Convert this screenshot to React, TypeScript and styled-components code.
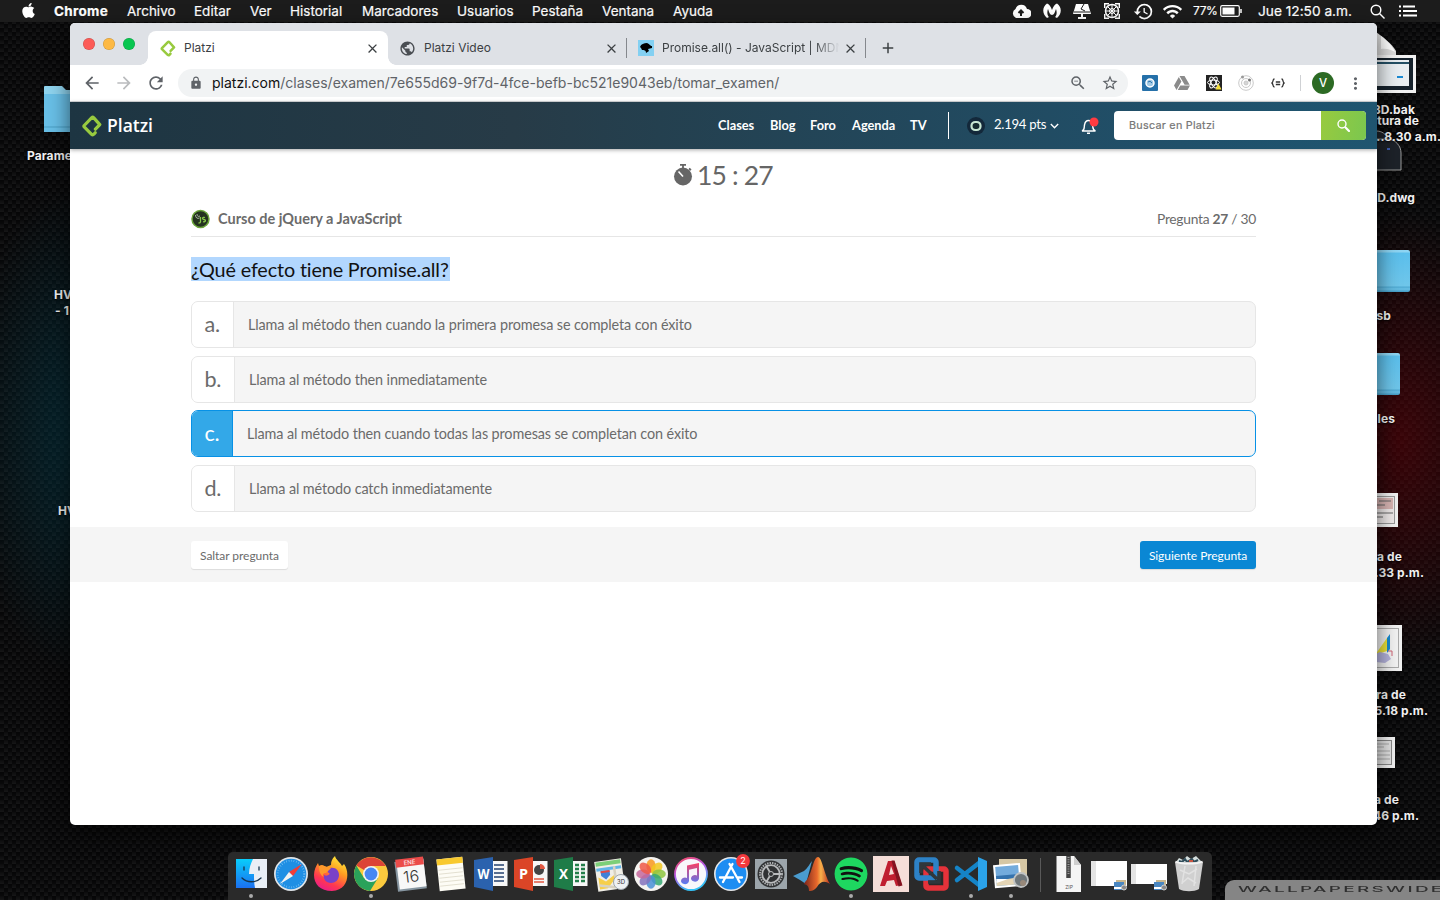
import React from "react";
import styled, { createGlobalStyle, css } from "styled-components";
import { FaApple, FaSpotify, FaGoogleDrive } from "react-icons/fa";
import {
  MdArrowBack, MdArrowForward, MdRefresh, MdLock, MdZoomOut, MdStarBorder,
  MdMoreVert, MdPublic, MdClose, MdAdd, MdHistory, MdWifi,
} from "react-icons/md";

const sans = `Inter, "Liberation Sans", sans-serif`;
const lato = `Lato, "Liberation Sans", sans-serif`;

const GlobalStyle = createGlobalStyle`
  * { box-sizing: border-box; }
  html, body { margin: 0; padding: 0; overflow: hidden; background: #0a0a0a; }
  body { font-variant-ligatures: none; }
  svg { display: block; flex: none; }
  button { border: 0; padding: 0; font: inherit; letter-spacing: inherit; }
`;

const Desktop = styled.div`
  position: relative;
  width: 1440px;
  height: 900px;
  overflow: hidden;
  font-family: ${sans};
  background:
    radial-gradient(ellipse 130px 230px at 1400px 440px, rgba(110, 0, 8, 0.48), transparent),
    radial-gradient(ellipse 130px 250px at 90px 430px, rgba(0, 75, 95, 0.45), transparent),
    linear-gradient(180deg, rgba(0, 0, 0, 0.45), transparent) 0 0 / 8px 4px,
    repeating-conic-gradient(#0a0a0b 0 25%, #161617 0 50%) 0 0 / 8px 8px;
`;

/* ---------- Menu bar ---------- */

const MenuBar = styled.header`
  display: flex;
  justify-content: space-between;
  height: 22px;
  padding: 0 22px 0 20px;
  background: #1c1c1c;
  color: #fff;
  font-size: 13.5px;
  line-height: 22px;
  white-space: nowrap;
  -webkit-text-stroke: 0.2px #fff;
`;
const MenuList = styled.nav`
  display: flex;
  align-items: center;
`;
const MenuItem = styled.span<{ $w: number; $bold?: boolean }>`
  flex: 0 0 ${(p) => p.$w}px;
  font-weight: ${(p) => (p.$bold ? 700 : 400)};
  letter-spacing: ${(p) => (p.$bold ? "0.3px" : "0")};
`;
const StatusList = styled.div`
  display: flex;
  align-items: center;
`;
const StatusItem = styled.span<{ $w: number }>`
  display: flex;
  align-items: center;
  flex: 0 0 ${(p) => p.$w}px;
`;
const Battery = styled.span`
  font-size: 12px;
  letter-spacing: -0.4px;
  width: 27px;
`;
const Clock = styled.span`
  font-size: 13.7px;
`;

/* ---------- Desktop items ---------- */

const Spot = styled.div<{ $x?: number; $r?: number; $y: number }>`
  position: absolute;
  top: ${(p) => p.$y}px;
  ${(p) => (p.$x !== undefined ? css`left: ${p.$x}px;` : css`right: ${1440 - (p.$r ?? 0)}px;`)}
`;
const Label = styled(Spot)`
  color: #f1f1f1;
  font-size: 12px;
  font-weight: 650;
  line-height: 16px;
  letter-spacing: 0.1px;
  white-space: nowrap;
  text-shadow: 0 1px 2px #000;
`;
const Folder = styled(Spot)`
  width: 60px;
  height: 42px;
  border-radius: 2px;
  background: linear-gradient(180deg, #8ed5f3 0 2px, #5bbfec 3px, #6fc6ea 36px, #4ea9d2 37px, #69c0e6 39px, #429bc4);
`;
const Thumb = styled(Spot)<{ $h: number }>`
  width: 60px;
  height: ${(p) => p.$h}px;
  padding: 3px;
  background: #f2f2f2;
  display: flex;
  justify-content: flex-end;
`;
const Watermark = styled.div`
  position: absolute;
  left: 1225px;
  top: 880px;
  width: 215px;
  height: 20px;
  padding-left: 13px;
  overflow: hidden;
  border-radius: 9px 0 0 0;
  background: #858585;
  color: #303030;
`;
const WatermarkText = styled.span`
  display: block;
  font-size: 8px;
  font-weight: 500;
  line-height: 19px;
  letter-spacing: 1px;
  transform: scaleX(2.36);
  transform-origin: left;
  white-space: nowrap;
`;

/* ---------- Browser ---------- */

const Window = styled.main`
  position: absolute;
  left: 70px;
  top: 23px;
  width: 1307px;
  height: 802px;
  display: flex;
  flex-direction: column;
  overflow: hidden;
  border-radius: 5px;
  background: #fff;
  box-shadow: 0 8px 22px rgba(0, 0, 0, 0.6);
`;
const TabStrip = styled.div`
  display: flex;
  height: 42px;
  padding: 8px 0 0 13px;
  background: #dee1e6;
  color: #3c4043;
`;
const Lights = styled.div`
  display: flex;
  gap: 8px;
  width: 65px;
  padding-top: 7px;
`;
const Light = styled.i<{ $c: string }>`
  width: 12px;
  height: 12px;
  border-radius: 50%;
  background: ${(p) => p.$c};
  box-shadow: inset 0 0 0 0.5px rgba(0, 0, 0, 0.2);
`;
const Tab = styled.div<{ $w: number; $active?: boolean; $rule?: boolean; $pad?: number }>`
  position: relative;
  display: flex;
  align-items: center;
  width: ${(p) => p.$w}px;
  height: 34px;
  padding: 0 8px 0 ${(p) => p.$pad ?? 12}px;
  border-radius: 8px 8px 0 0;
  background: ${(p) => (p.$active ? "#fff" : "transparent")};
  ${(p) => p.$active && css`
    &::before, &::after {
      content: "";
      position: absolute;
      bottom: 0;
      width: 8px;
      height: 8px;
    }
    &::before { left: -8px; background: radial-gradient(circle at 0 0, transparent 7.5px, #fff 8px); }
    &::after { right: -8px; background: radial-gradient(circle at 100% 0, transparent 7.5px, #fff 8px); }
  `}
  ${(p) => p.$rule && css`
    &::after {
      content: "";
      position: absolute;
      right: 0;
      top: 7px;
      width: 1px;
      height: 20px;
      background: #85888d;
    }
  `}
`;
const TabTitle = styled.span<{ $fade?: boolean }>`
  flex: 1;
  margin-left: 8px;
  overflow: hidden;
  white-space: nowrap;
  font-size: 12px;
  line-height: 20px;
  ${(p) => p.$fade && css`mask-image: linear-gradient(90deg, #000 84%, transparent 98%);`}
`;
const NewTab = styled.div`
  display: flex;
  align-items: center;
  height: 34px;
  padding-left: 13px;
  stroke-width: 0.8px;
`;
const Toolbar = styled.div`
  display: flex;
  align-items: center;
  height: 37px;
  padding: 0 12px 1px;
  color: #5f6368;
`;
const ToolIcon = styled.span<{ $w: number }>`
  display: flex;
  flex: 0 0 ${(p) => p.$w}px;
`;
const Omnibox = styled.div`
  display: flex;
  align-items: center;
  width: 950px;
  height: 28px;
  padding: 0 9px 0 11px;
  border-radius: 14px;
  background: #f1f3f4;
`;
const Url = styled.span`
  flex: 1;
  margin-left: 9px;
  font-size: 14.02px;
  line-height: 20px;
  white-space: nowrap;
  color: #5f6368;
  b { font-weight: 400; color: #111; }
`;
const Extensions = styled.div`
  display: flex;
  align-items: center;
  margin-left: 14px;
`;
const Rule = styled.i`
  width: 1px;
  height: 16px;
  margin: 0 11px 0 14px;
  background: #cfd1d4;
`;
const Profile = styled.span`
  width: 22px;
  height: 22px;
  margin-right: 12px;
  border-radius: 50%;
  background: #2c6a24;
  color: #fff;
  font-size: 11.5px;
  font-weight: 500;
  line-height: 22px;
  text-align: center;
`;

/* ---------- Platzi page ---------- */

const SiteHeader = styled.div`
  position: relative;
  display: flex;
  align-items: center;
  height: 47px;
  flex: none;
  padding: 0 11px 0 12px;
  background: linear-gradient(90deg, #1d3542, #273b47 34%, #24404f 45%, #20506a 85%, #1f5570);
  box-shadow: 0 1px 4px rgba(0, 0, 0, 0.35);
  color: #fff;
  font-family: ${lato};
`;
const HeaderEdge = styled.i`
  height: 1px;
  flex: none;
  background: #d8dadd;
  margin-top: -1px;
`;
const Brand = styled.span`
  width: 611px;
  margin-left: 5px;
  font-family: "Open Sans", ${lato};
  font-size: 17.5px;
  font-weight: 600;
  line-height: 24px;
  padding-bottom: 1px;
`;
const NavLink = styled.span<{ $w: number }>`
  flex: 0 0 ${(p) => p.$w}px;
  font-size: 12.8px;
  font-weight: 700;
  line-height: 20px;
  padding-bottom: 1px;
`;
const NavRule = styled.i`
  width: 1px;
  height: 27px;
  background: #fff;
`;
const Points = styled.span`
  width: 56px;
  margin-left: 9px;
  font-size: 13.2px;
  letter-spacing: -0.3px;
  line-height: 20px;
  padding-bottom: 4px;
  white-space: nowrap;
`;
const Search = styled.div`
  display: flex;
  width: 252px;
  height: 29px;
  margin-left: auto;
  overflow: hidden;
  border-radius: 4px;
  background: #fff;
`;
const SearchField = styled.span`
  flex: 1;
  padding-left: 15px;
  color: #757575;
  font-family: ${sans};
  font-size: 10.8px;
  letter-spacing: 0.25px;
  line-height: 29px;
  -webkit-text-stroke: 0.2px #757575;
`;
const SearchButton = styled.button`
  display: flex;
  align-items: center;
  justify-content: center;
  width: 45px;
  background: linear-gradient(100deg, #98ca3f, #7bc74f);
`;

const Exam = styled.section`
  width: 1065px;
  margin-left: 121px;
  color: #6b6b6b;
  font-family: ${lato};
`;
const Timer = styled.div`
  display: flex;
  align-items: center;
  height: 52px;
  padding-left: 482px;
  font-size: 26.5px;
  letter-spacing: -0.85px;
  line-height: 54px;
  color: #666;
  gap: 4px;
`;
const CourseRow = styled.div`
  display: flex;
  align-items: center;
  height: 36px;
  border-bottom: 1px solid #e6e6e6;
`;
const CourseName = styled.b`
  flex: 1;
  margin-left: 8px;
  font-size: 14.5px;
`;
const Progress = styled.span`
  font-size: 13.8px;
  letter-spacing: -0.27px;
`;
const Question = styled.h1`
  width: 259px;
  height: 24px;
  margin: 20px 0;
  background: #b2d7fe;
  color: #111;
  font-size: 19.8px;
  letter-spacing: -0.14px;
  font-weight: 400;
  line-height: 25px;
  white-space: nowrap;
`;
const Options = styled.div`
  display: flex;
  flex-direction: column;
  gap: 7.4px;
`;
const Option = styled.div<{ $selected?: boolean }>`
  display: flex;
  height: 47.2px;
  overflow: hidden;
  border: 1px solid ${(p) => (p.$selected ? "#0791e6" : "#e6e6e6")};
  border-radius: 7px;
  background: #f5f5f5;
`;
const Letter = styled.span<{ $selected?: boolean; $w: number }>`
  width: ${(p) => p.$w}px;
  padding-left: 12.5px;
  border-right: 1px solid ${(p) => (p.$selected ? "#0791e6" : "#e6e6e6")};
  background: ${(p) => (p.$selected ? "#33a8e8" : "#fff")};
  color: ${(p) => (p.$selected ? "#fff" : "#6b6b6b")};
  font-size: 21.6px;
  letter-spacing: -0.3px;
  line-height: 44px;
`;
const Answer = styled.span`
  padding-left: 14px;
  font-size: 14.4px;
  letter-spacing: -0.11px;
  line-height: 46px;
`;
const Actions = styled.div`
  display: flex;
  justify-content: space-between;
  align-items: center;
  height: 55px;
  margin-top: 15px;
  padding: 1px 121px 0;
  background: #f5f5f5;
  font-family: ${lato};
  letter-spacing: -0.05px;
`;
const ActionButton = styled.button<{ $primary?: boolean; $w: number }>`
  width: ${(p) => p.$w}px;
  height: 28px;
  border-radius: 3px;
  background: ${(p) => (p.$primary ? "#0a87d4" : "#fff")};
  color: ${(p) => (p.$primary ? "#fff" : "#6b6b6b")};
  box-shadow: 0 1px 1px rgba(0, 0, 0, 0.1);
  font-size: 12px;
  line-height: 29px;
`;

/* ---------- Dock ---------- */

const Dock = styled.footer`
  position: absolute;
  left: 228px;
  top: 852px;
  width: 984px;
  height: 48px;
  display: flex;
  padding: 4px 3px 0;
  border-radius: 5px 5px 0 0;
  background: #2a2a2a;
`;
const DockItem = styled.div<{ $running?: boolean }>`
  position: relative;
  display: flex;
  flex: 0 0 40px;
  justify-content: center;
  height: 36px;
  ${(p) => p.$running && css`
    &::after {
      content: "";
      position: absolute;
      left: 18px;
      top: 38px;
      width: 4px;
      height: 4px;
      border-radius: 50%;
      background: #aaa;
    }
  `}
`;
const DockRule = styled.i`
  width: 1px;
  height: 34px;
  margin: 2px 8px 0 9px;
  background: #5a5a5a;
`;

const Glyph = ({ children }: { children: React.ReactNode }) => (
  <svg width={36} height={36} viewBox="0 0 36 36">{children}</svg>
);

const PlatziMark = ({ w, h }: { w: number; h: number }) => (
  <svg width={w} height={h} viewBox="0 0 20 22" fill="none" stroke="#98ca3f" strokeWidth="3.2" strokeLinejoin="round" strokeLinecap="round">
    <path d="M13.400 14.200 17.800 9.600 11.600 2.600Q10.700 1.800 9.800 2.700L2.200 10.500Q1.600 11.200 2.200 11.900L9.600 19.300Q10.800 20.300 11.900 19.200L13.200 17.700" />
  </svg>
);

const finder = (
  <Glyph>
    <defs><linearGradient id="fa" x2="0" y2="1"><stop stopColor="#09cdfb" /><stop offset="1" stopColor="#1b70f0" /></linearGradient></defs>
    <path d="M3 3h31v29H3z" fill="#e9eff6" />
    <path d="M3 3h17c-2 4-4 9-4 15h5c0 5 0 9 1 14H3z" fill="url(#fa)" />
    <path d="M11 11v3M26 11v3M9 22c5 5 14 5 19 0" stroke="#16334c" strokeWidth="1.300" fill="none" strokeLinecap="round" />
  </Glyph>
);
const safari = (
  <Glyph>
    <circle cx="18" cy="18" r="17" fill="#dfe5e9" />
    <circle cx="18" cy="18" r="15.300" fill="#1f8fe4" />
    <circle cx="18" cy="18" r="13.300" fill="none" stroke="#8ccbf5" strokeWidth="2" strokeDasharray=".5 2" />
    <path d="M29 8 20 20l-4-4z" fill="#f23c36" /><path d="M7 28l9-12 4 4z" fill="#f2f2f2" />
  </Glyph>
);
const firefox = (
  <Glyph>
    <defs><linearGradient id="ff" x1=".8" y1="0" x2=".3" y2="1"><stop stopColor="#fff33c" /><stop offset=".4" stopColor="#ff9a21" /><stop offset=".75" stopColor="#ff3750" /><stop offset="1" stopColor="#e91d8c" /></linearGradient></defs>
    <path d="M22 0c1 4 5 6 7 10l2-2c6 8 5 26-12 27C7 35 1 28 1 19c0-5 2-9 4-12l1 3 3-1 4 2 5-2c0-4 1-6 4-9z" fill="url(#ff)" />
    <path d="M17 12c6-1 9 3 9 7 0 5-4 8-8 8-5 0-8-4-7-8 3 2 7-1 5-2-3-1 0-4 1-5z" fill="#7a41c8" />
    <path d="M6 10c3-2 6 0 8 1l4 1c-1 2-4 3-5 5-3 0-4 2-2 4-4-2-5-6-5-11z" fill="#ff9a2c" />
  </Glyph>
);
const chrome = (
  <Glyph>
    <circle cx="18" cy="18" r="17" fill="#fbca3e" />
    <path d="M18 18 3.300 9.500A17 17 0 0 1 32.700 10H18z" fill="#dc4437" />
    <path d="M3.300 9.500A17 17 0 0 0 17 35l8-13-14 0z" fill="#2aa25a" />
    <circle cx="18" cy="18" r="8" fill="#f3f3f3" /><circle cx="18" cy="18" r="6.400" fill="#4687f3" />
  </Glyph>
);
const calendar = (
  <Glyph>
    <g transform="rotate(-7 18 18)">
      <path d="M3 4h29v30H3z" fill="#8796a1" /><path d="M5 4h27v28H5z" fill="#f8f8f8" /><path d="M4 2h28v8H4z" fill="#eb4c4a" />
      <text x="18" y="8.500" fontSize="6" fill="#fff" textAnchor="middle" fontFamily="Inter">ENE</text>
      <text x="18" y="26" fontSize="16" fill="#333" textAnchor="middle" fontFamily="Inter" fontWeight="300">16</text>
    </g>
  </Glyph>
);
const notes = (
  <Glyph>
    <g transform="rotate(-6 18 18)">
      <path d="M5 2h26v32H5z" fill="#fdfcf5" /><path d="M5 2h26v6H5z" fill="#f8c92e" />
      <path d="M6 13h24M6 17h24M6 21h24M6 25h24M6 29h24" stroke="#dedac9" strokeWidth=".8" />
    </g>
  </Glyph>
);
const office = (letter: string, color: string, art: React.ReactNode) => (
  <Glyph>
    <path d="M19 5h15.500v25H19z" fill="#f7f7f7" />
    {art}
    <path d="M1 4 20 1v34L1 31z" fill={color} />
    <text x="10.500" y="23" fontSize="14.500" fontWeight="700" fill="#fff" textAnchor="middle" fontFamily="Open Sans" textLength={letter === "W" ? 12 : 9} lengthAdjust="spacingAndGlyphs">{letter}</text>
  </Glyph>
);
const word = office("W", "#2b62ae", <path d="M21 9h10M21 13h10M21 17h10M21 21h10M21 25h10" stroke="#25426f" strokeWidth="1.500" />);
const powerpoint = office("P", "#db4527", <g><circle cx="26" cy="14" r="5" fill="#444" /><path d="M27 13V8a5 5 0 0 1 5 5z" fill="#e25843" /><path d="M21 23h10M21 26h10" stroke="#e25843" strokeWidth="1.500" /></g>);
const excel = office("X", "#1f7c48", <path d="M22 9h4M22 13h4M22 17h4M22 21h4M22 25h4M28 9h4M28 13h4M28 17h4M28 21h4M28 25h4" stroke="#237e4a" strokeWidth="2.400" />);
const maps = (
  <Glyph>
    <g transform="rotate(-8 16 18)">
      <path d="M3 4h27v30H3z" fill="#f0eee6" /><path d="M4 5h25v4H4z" fill="#7ccf78" />
      <path d="M4 11h25v3H4z" fill="#63b5e8" /><path d="M5 20l7 5 10-6v4l-9 9H5z" fill="#f6cf4b" />
      <path d="M22 11v20M5 28l16 4" stroke="#d8d2c1" strokeWidth="2.500" /><path d="M8 14h9v5l-4.500 4L8 19z" fill="#3f81d8" />
      <path d="M8 14h9v2H8z" fill="#e24a45" />
    </g>
    <circle cx="28" cy="26" r="7.500" fill="#eef1f3" stroke="#9da5ab" />
    <text x="28" y="28.300" fontSize="6" fontFamily="Inter" fill="#333" textAnchor="middle">3D</text>
  </Glyph>
);
const photos = (
  <Glyph>
    <circle cx="18" cy="18" r="17" fill="#f5f3f0" />
    {["#f8981d", "#f2c71f", "#8ec63f", "#35a872", "#4a8fd6", "#8472bd", "#c4679c", "#ee5848"].map((c, i) => (
      <ellipse key={c} cx="18" cy="10" rx="4.600" ry="6.800" fill={c} opacity=".85" transform={`rotate(${i * 45} 18 18)`} />
    ))}
  </Glyph>
);
const itunes = (
  <Glyph>
    <defs>
      <linearGradient id="it" x2=".4" y2="1"><stop stopColor="#fb4758" /><stop offset=".5" stopColor="#b45bea" /><stop offset="1" stopColor="#35c2f7" /></linearGradient>
      <linearGradient id="itn" x2="0" y2="1"><stop stopColor="#fa3e63" /><stop offset="1" stopColor="#567cf5" /></linearGradient>
    </defs>
    <circle cx="18" cy="18" r="16" fill="#f8f7fb" stroke="url(#it)" strokeWidth="1.800" />
    <path d="M14 9.500 26 7v15.500a4 3.300 0 1 1-2-3V12l-8 1.700V25a4 3.300 0 1 1-2-3z" fill="url(#itn)" />
  </Glyph>
);
const AppStoreIcon = styled.svg`
  margin-top: -2px;
`;
const appStore = (
  <AppStoreIcon width="40" height="38" viewBox="-2 -2 40 38">
    <circle cx="18" cy="18" r="17" fill="#e6e8ea" /><circle cx="18" cy="18" r="15.400" fill="#1d8df2" />
    <path d="M19.500 8 10 26M16.500 8l10 18M7 21.500h13M24 21.500h5" stroke="#fff" strokeWidth="2.300" strokeLinecap="round" />
    <circle cx="30" cy="5" r="6.900" fill="#f4393d" />
    <text x="30" y="8.200" fontSize="9" fill="#fff" textAnchor="middle" fontFamily="Inter">2</text>
  </AppStoreIcon>
);
const settings = (
  <Glyph>
    <path d="M2 3h32v30H2z" fill="#9ca5ab" />
    <circle cx="18" cy="18" r="13.500" fill="#303234" />
    <circle cx="18" cy="18" r="11" fill="none" stroke="#a9acae" strokeWidth="2" strokeDasharray="1.500 1" />
    <circle cx="18" cy="18" r="8.800" fill="none" stroke="#b9bbbd" strokeWidth="1.800" />
    <path d="M18 18h10M18 18l-5-8.500M18 18l-5 8.500" stroke="#b9bbbd" strokeWidth="1.800" />
    <circle cx="18" cy="18" r="2.500" fill="#303234" stroke="#b9bbbd" />
  </Glyph>
);
const matlab = (
  <svg width="38" height="36" viewBox="0 0 38 36">
    <defs><linearGradient id="ml"><stop stopColor="#7b251c" /><stop offset=".5" stopColor="#e8692c" /><stop offset=".65" stopColor="#f8b04a" /><stop offset="1" stopColor="#b7281c" /></linearGradient></defs>
    <path d="M1 20l11-5c4-3 6-8 8-10l-6 23-6-4z" fill="#4a9ccf" />
    <path d="M13 26C20 20 21 1 26 1c4 0 6 17 12 27-6-4-10-2-13 3-3 4-6 4-8 4 0-5-2-6-5-7z" fill="url(#ml)" />
  </svg>
);
const SpotifyIcon = styled(FaSpotify)`
  margin-top: 1px;
  border-radius: 50%;
  background: radial-gradient(#111 60%, transparent 62%);
`;
const autocad = (
  <Glyph>
    <path d="M0 0h36v36H0z" fill="#f5ded8" />
    <path d="M7 30 15 5h6l8 24-6 1-2-6-7 1-2 5zm9-11 5-1-3-8z" fill="#c01f30" fillRule="evenodd" /><path d="M18.500 4.500h3l8 25-4 1z" fill="#841420" />
  </Glyph>
);
const vmware = (
  <Glyph>
    <rect x="13" y="13" width="20" height="19" rx="2" fill="none" stroke="#e5323a" strokeWidth="5.500" />
    <rect x="4" y="4" width="19" height="18" rx="2" fill="none" stroke="#2d82c7" strokeWidth="5.500" />
    <path d="m10 10 14 13M15 26h11V15M8 17V8h10" stroke="#30373c" strokeWidth="3.600" fill="none" />
  </Glyph>
);
const vscode = (
  <Glyph>
    <path d="M4 12 26 29M4 24 26 7" stroke="#1584c7" strokeWidth="4.500" strokeLinecap="round" />
    <path d="m25 1 9 4v26l-9 4z" fill="#2ba3ea" />
  </Glyph>
);
const preview = (
  <Glyph>
    <path d="M6 3h28v22H6z" fill="#d6c7a4" />
    <g transform="rotate(-5 15 20)"><path d="M1 8h27v23H1z" fill="#fff" /><path d="M3 10h23v19H3z" fill="#73abdc" /><path d="M3 19h23v5H3z" fill="#3472ad" /><path d="m3 29 0-5 23-2v7z" fill="#e4d5b5" /><path d="m3 22 12 1-12 3z" fill="#fff" /></g>
    <circle cx="28" cy="24" r="7" fill="#6f777b" stroke="#bfc2c3" strokeWidth="1.800" /><circle cx="30" cy="27" r="3" fill="#98897a" />
  </Glyph>
);
const zip = (
  <Glyph>
    <path d="M5.500 0H23l7 9v27H5.500z" fill="#f5f5f5" /><path d="M23 0v9h7z" fill="#cfcfcf" />
    <path d="M17.500 0v22" stroke="#444" strokeWidth="4.500" /><path d="M17.500 1v18" stroke="#999" strokeWidth="2" strokeDasharray="1 1.300" />
    <text x="18" y="33" fontSize="5" fill="#555" textAnchor="middle" fontFamily="Inter">ZIP</text>
  </Glyph>
);
const minimized = (top: number, h: number) => (
  <Glyph>
    <rect x="0" y={top} width="36" height={h} fill="#fff" /><path d={`M0 ${top}h5v${h}H0z`} fill="#e4e4e4" />
    <path d="M25 24h10v10H25z" fill="#c9b78f" /><path d="M23 26h10v8H23z" fill="#4b87c0" /><path d="M23 31h10v2H23z" fill="#fff" /><circle cx="33" cy="31.500" r="2.500" fill="#888" stroke="#ccc" />
  </Glyph>
);
const trash = (
  <Glyph>
    <path d="m5 6 3-4 4 2 4-4 4 3 5-3 6 6z" fill="#d4dedd" />
    <path d="m8 5 3 1 3-3 2 3 5-3 2 3 4-2" stroke="#304d5a" strokeWidth="2" fill="none" /><path d="M18 5h4" stroke="#c85642" strokeWidth="2" />
    <path d="M4 6h28l-4 27c-5 3-15 3-20 0z" fill="#d0d0d0" />
    <path d="M4.500 5.500c5 3 22 3 27 0" stroke="#f5f5f5" fill="none" strokeWidth="1.500" />
    <path d="M9 14l9 4 8-5M11 27l6-5 8 5M14 10l-3 18M25 10l-2 20" stroke="#e2e2e2" fill="none" strokeWidth="1.500" />
  </Glyph>
);

const apps: [React.ReactNode, boolean?][] = [
  [finder, true], [safari], [firefox], [chrome, true], [calendar], [notes], [word], [powerpoint], [excel],
  [maps], [photos], [itunes], [appStore], [settings], [matlab], [<SpotifyIcon key="s" size={34} color="#1ed760" />, true],
  [autocad], [vmware], [vscode, true], [preview, true],
];

const menus: [string, number][] = [
  ["Archivo", 67], ["Editar", 56], ["Ver", 40], ["Historial", 72], ["Marcadores", 95],
  ["Usuarios", 75], ["Pestaña", 70], ["Ventana", 71], ["Ayuda", 50],
];
const options = [
  { id: "a.", w: 42, text: "Llama al método then cuando la primera promesa se completa con éxito" },
  { id: "b.", w: 43, text: "Llama al método then inmediatamente" },
  { id: "c.", w: 41, text: "Llama al método then cuando todas las promesas se completan con éxito", selected: true },
  { id: "d.", w: 43, text: "Llama al método catch inmediatamente" },
];
const links: [string, number][] = [["Clases", 52], ["Blog", 40], ["Foro", 42], ["Agenda", 58], ["TV", 38]];

const AppleLogo = styled(FaApple)`
  margin-top: -1px;
`;
const Avatar = styled.svg`
  margin-left: 18px;
`;
const Bell = styled.svg`
  margin-left: 22px;
`;

export default function App() {
  return (
    <>
      <GlobalStyle />
      <Desktop>
        <MenuBar>
          <MenuList>
            <MenuItem $w={34}><AppleLogo size={17} /></MenuItem>
            <MenuItem $w={73} $bold>Chrome</MenuItem>
            {menus.map(([name, w]) => <MenuItem key={name} $w={w}>{name}</MenuItem>)}
          </MenuList>
          <StatusList>
            <StatusItem $w={32}>
              <svg width="20" height="15" viewBox="0 0 20 15"><path d="M5 14a5 5 0 0 1-.5-9A6 6 0 0 1 16 5a4.500 4.500 0 0 1 0 9z" fill="#fff" /><path d="M10 12V7M7.500 9 10 6.500 12.500 9" stroke="#1c1c1c" strokeWidth="2" fill="none" /></svg>
            </StatusItem>
            <StatusItem $w={30}>
              <svg width="18" height="16" viewBox="0 0 18 16"><path d="M4 15C-1 11-1 4 4 .5 6 1 8 4 9 7c1-3 3-6 5-6.500 5 3.500 5 10.500 0 14.500l-2-1c2-2 2-5 1-8-1 3-2 6-4 6S6 9 5 6c-1 3-1 6 1 8z" fill="#fff" /></svg>
            </StatusItem>
            <StatusItem $w={31}>
              <svg width="18" height="16" viewBox="0 0 18 16"><path d="M3 1h12l3 10H0z" fill="#fff" /><path d="M9 11v4M5 15h8" stroke="#fff" strokeWidth="2" /><path d="M11 1 8 6l4 2M1 9h16" stroke="#1c1c1c" fill="none" /></svg>
            </StatusItem>
            <StatusItem $w={29}>
              <svg width="16" height="16" viewBox="0 0 16 16" stroke="#fff" fill="none"><path d="M.7 5V.7H5M11 .7h4.300V5M15.300 11v4.300H11M5 15.300H.7V11" strokeWidth="1.400" /><circle cx="8" cy="8" r="6.500" strokeWidth="1.500" /><path d="M8 2v12M2 8h12M4 4l8 8M12 4l-8 8" strokeWidth="1" /><circle cx="8" cy="8" r="2.500" /></svg>
            </StatusItem>
            <StatusItem $w={29}><MdHistory size={21} /></StatusItem>
            <StatusItem $w={31}><MdWifi size={21} /></StatusItem>
            <StatusItem $w={65}>
              <Battery>77%</Battery>
              <svg width="23" height="12" viewBox="0 0 23 12"><rect x=".7" y=".7" width="18.600" height="10.600" rx="1.500" fill="none" stroke="#fff" strokeWidth="1.200" /><path d="M2.500 2.500h12v7h-12z" fill="#fff" /><path d="M21 4v4" stroke="#fff" strokeWidth="1.500" /></svg>
            </StatusItem>
            <StatusItem $w={112}><Clock>Jue 12:50 a.m.</Clock></StatusItem>
            <StatusItem $w={29}>
              <svg width="15" height="15" viewBox="0 0 15 15" fill="none" stroke="#fff" strokeWidth="1.400"><circle cx="6" cy="6" r="4.800" /><path d="m9.500 9.500 5 5" /></svg>
            </StatusItem>
            <svg width="19" height="12" viewBox="0 0 19 12" stroke="#fff" strokeWidth="2"><path d="M0 1.500h2M4 1.500h12M0 6h2M4 6h14M0 10.500h2M4 10.500h14" /></svg>
          </StatusList>
        </MenuBar>

        <Spot $x={43} $y={85}>
          <svg width="60" height="48" viewBox="0 0 60 48"><path d="M1 2q0-1 1-1h17l4 4h37v42H1z" fill="#8fd4ef" /><path d="M1 9h59v36q0 2-2 2H1z" fill="#69c0e8" /><path d="M1 42h59" stroke="#4b9fc5" /></svg>
        </Spot>
        <Label $x={27} $y={148}>Parame</Label>
        <Label $x={54} $y={287}>HV</Label>
        <Label $x={55} $y={303}>- 1</Label>
        <Label $x={58} $y={503}>HV</Label>

        <Spot $r={1397} $y={32}>
          <svg width="30" height="24" viewBox="0 0 30 24"><path d="M0 0h9c7 5 15 11 20 19v5H0z" fill="#dcdcdc" /><path d="M14 4v13c6-1 10 1 14 3-2-5-7-11-14-16z" fill="#fff" /></svg>
        </Spot>
        <Thumb $r={1416} $y={55} $h={38}>
          <svg width="54" height="32" viewBox="0 0 54 32"><path d="M0 0h54v32H0z" fill="#16222c" /><path d="M0 2h50v26H0z" fill="#e9eef1" /><path d="M0 4h50v2H0z" fill="#245065" /><path d="M38 18h6v2h-6z" fill="#1b8ad2" /></svg>
        </Thumb>
        <Spot $r={1402} $y={130}>
          <svg width="40" height="42" viewBox="0 0 40 42"><path d="M0 1h14c6 0 10 3 12 8 8 1 13 7 13 14v17H0z" fill="#1d2229" stroke="#9a9a9a" /><path d="M8 9h18" stroke="#888" /><path d="M25 19h3" stroke="#3d5bb0" strokeWidth="2" /></svg>
        </Spot>
        <Label $r={1415} $y={102}>3D.bak</Label>
        <Label $r={1419} $y={113}>tura de</Label>
        <Label $r={1441} $y={129}>...8.30 a.m.</Label>
        <Label $r={1415} $y={190}>D.dwg</Label>
        <Folder $r={1410} $y={250} />
        <Label $r={1391} $y={308}>sb</Label>
        <Folder $r={1400} $y={353} />
        <Label $r={1395} $y={411}>les</Label>
        <Thumb $r={1398} $y={493} $h={34}>
          <svg width="30" height="28" viewBox="0 0 30 28"><path d="M0 0h30v28H0z" fill="#999" /><path d="M0 1h29v26H0z" fill="#efeaea" /><path d="M0 2h28v11H0z" fill="#d8b5b3" /><path d="M14 5h12M12 9h8M12 17h16M12 21h6" stroke="#666" /></svg>
        </Thumb>
        <Label $r={1402} $y={549}>ra de</Label>
        <Label $r={1424} $y={565}>.33 p.m.</Label>
        <Thumb $r={1402} $y={625} $h={46}>
          <svg width="30" height="40" viewBox="0 0 30 40"><path d="M0 0h30v40H0z" fill="#aaa" /><path d="M0 1h29v38H0z" fill="#f3f3f3" /><path d="M6 27 18 10v13z" fill="#ece33a" /><path d="m18 10 3-4v15l-3 4z" fill="#178bd0" /><path d="M4 27l7-3 8 2 3 5-6 4-9-1z" fill="#b5b3dc" /><path d="M19 23h4v5" stroke="#d06476" fill="none" /></svg>
        </Thumb>
        <Label $r={1406} $y={687}>ra de</Label>
        <Label $r={1428} $y={703}>5.18 p.m.</Label>
        <Thumb $r={1395} $y={737} $h={31}>
          <svg width="30" height="25" viewBox="0 0 30 25"><path d="M0 0h30v25H0z" fill="#888" /><path d="M0 1h29v23H0z" fill="#e2e2e2" /><path d="M10 4h17M10 7h12M8 11h20M8 15h20M8 19h20" stroke="#aaa" /></svg>
        </Thumb>
        <Label $r={1399} $y={792}>ra de</Label>
        <Label $r={1419} $y={808}>46 p.m.</Label>
        <Watermark><WatermarkText>WALLPAPERSWIDE</WatermarkText></Watermark>

        <Window>
          <TabStrip>
            <Lights><Light $c="#fc5b57" /><Light $c="#fdb944" /><Light $c="#08c650" /></Lights>
            <Tab $w={240} $active>
              <PlatziMark w={16} h={17} />
              <TabTitle>Platzi</TabTitle>
              <MdClose size={15} color="#3c4043" stroke="#3c4043" />
            </Tab>
            <Tab $w={239} $rule $pad={11}>
              <MdPublic size={17} color="#4a4e53" />
              <TabTitle>Platzi Video</TabTitle>
              <MdClose size={15} stroke="#3c4043" />
            </Tab>
            <Tab $w={239} $rule $pad={11}>
              <svg width="16" height="16" viewBox="0 0 16 16"><path d="M0 0h16v16H0z" fill="#83d0f2" /><path d="M2 7c1-3 4-4 7-4 3 1 3 3 5 3v2l-4 1 1 2-3 2c0-3-2-3-4-3L3 8z" fill="#000" /></svg>
              <TabTitle $fade>Promise.all() - JavaScript | MDN</TabTitle>
              <MdClose size={15} stroke="#3c4043" />
            </Tab>
            <NewTab><MdAdd size={18} stroke="#3c4043" /></NewTab>
          </TabStrip>
          <Toolbar>
            <ToolIcon $w={32}><MdArrowBack size={20} /></ToolIcon>
            <ToolIcon $w={32}><MdArrowForward size={20} color="#babcbe" /></ToolIcon>
            <ToolIcon $w={32}><MdRefresh size={20} /></ToolIcon>
            <Omnibox>
              <MdLock size={14} />
              <Url><b>platzi.com</b>/clases/examen/7e655d69-9f7d-4fce-befb-bc521e9043eb/tomar_examen/</Url>
              <ToolIcon $w={32}><MdZoomOut size={18} /></ToolIcon>
              <MdStarBorder size={18} />
            </Omnibox>
            <Extensions>
              <ToolIcon $w={32}>
                <svg width="16" height="16" viewBox="0 0 16 16"><rect width="16" height="16" rx="1" fill="#2570a9" /><circle cx="8" cy="8" r="4" fill="#9fc8e5" stroke="#fff" strokeWidth="1.500" /><path d="M6 7q2-2 4 1" fill="none" stroke="#2570a9" /></svg>
              </ToolIcon>
              <ToolIcon $w={32}><FaGoogleDrive size={16} color="#8b8b8b" /></ToolIcon>
              <ToolIcon $w={32}>
                <svg width="16" height="16" viewBox="0 0 16 16" fill="none" stroke="#fff"><path d="M0 0h16v16H0z" fill="#222" stroke="none" /><ellipse cx="7.500" cy="7.500" rx="6" ry="2.400" /><ellipse cx="7.500" cy="7.500" rx="6" ry="2.400" transform="rotate(60 7.500 7.500)" /><ellipse cx="7.500" cy="7.500" rx="6" ry="2.400" transform="rotate(120 7.500 7.500)" /><path d="m12.500 8.500 3 6h-6z" fill="#f5df38" stroke="none" /></svg>
              </ToolIcon>
              <ToolIcon $w={32}>
                <svg width="16" height="16" viewBox="0 0 16 16" fill="none" stroke="#c9c9c9"><circle cx="8" cy="8" r="7.300" /><circle cx="8" cy="8" r="4.500" /><circle cx="8" cy="8" r="2" fill="#d5d5d5" /><circle cx="4.500" cy="2" r="1.500" fill="#999" stroke="none" /><circle cx="11.500" cy="5" r="1.500" fill="#777" stroke="none" /></svg>
              </ToolIcon>
              <svg width="16" height="16" viewBox="0 0 16 16" fill="none" stroke="#333" strokeWidth="1.300"><path d="M4.500 4C2 4 4 7.500 1.500 8 4 8.500 2 12 4.500 12M11.500 4c2.500 0 .5 3.500 3 4-2.500.5-.5 4-3 4M5.800 7h4.400M5.800 9.500h4.400" /></svg>
              <Rule />
              <Profile>V</Profile>
              <MdMoreVert size={19} />
            </Extensions>
          </Toolbar>
          <HeaderEdge />
          <SiteHeader>
            <PlatziMark w={20} h={22} />
            <Brand>Platzi</Brand>
            {links.map(([name, w]) => <NavLink key={name} $w={w}>{name}</NavLink>)}
            <NavRule />
            <Avatar width="18" height="18" viewBox="0 0 18 18"><circle cx="9" cy="9" r="9" fill="#13283a" /><rect x="4.500" y="5" width="9" height="8" rx="3.800" fill="#172c30" stroke="#c7e6d2" strokeWidth="2.200" /></Avatar>
            <Points>2.194 pts</Points>
            <svg width="9" height="6" viewBox="0 0 9 6" fill="none" stroke="#fff" strokeWidth="1.400"><path d="m.8 1 3.700 3.700L8.200 1" /></svg>
            <Bell width="19" height="18" viewBox="0 0 19 18"><path d="M1 14c3-1 2-4 2.500-6 .5-3 1.500-4.500 4-4.500S11 5 11.500 8s0 5 3 6z" fill="none" stroke="#fff" strokeWidth="1.400" /><path d="M6 16.300h3" stroke="#fff" strokeWidth="1.500" /><circle cx="13" cy="5" r="4.500" fill="#ff3b41" /></Bell>
            <Search>
              <SearchField>Buscar en Platzi</SearchField>
              <SearchButton aria-label="Buscar">
                <svg width="13" height="13" viewBox="0 0 13 13" fill="none" stroke="#fff"><circle cx="5" cy="5" r="4" strokeWidth="1.400" /><path d="m8.500 8.500 3.500 3.500" strokeWidth="2.200" strokeLinecap="round" /></svg>
              </SearchButton>
            </Search>
          </SiteHeader>

          <Exam>
            <Timer>
              <svg width="20" height="22" viewBox="0 0 20 22"><circle cx="10" cy="12.500" r="9" fill="#666" /><path d="M7 .8h6M10 1v4M16 4.500l2 1.500" stroke="#666" strokeWidth="1.800" /><path d="m5.500 7.500 4.500 5" stroke="#fff" strokeWidth="1.600" /></svg>
              <span>15 : 27</span>
            </Timer>
            <CourseRow>
              <svg width="19" height="20" viewBox="0 0 19 20"><circle cx="9.500" cy="10" r="8.500" fill="#24331f" stroke="#6ca53b" strokeWidth="1.500" /><path d="M4.500 6c0 3 2 4 4 3M6 5c0 2 1 3 3 2" stroke="#a8b5a0" fill="none" /><path d="M9.500 8v5c0 1-1 1-2 1M14 8.500c-3-1-3 2-1 2s2 3-1 2.200" stroke="#87c74a" fill="none" strokeWidth="1.300" /></svg>
              <CourseName>Curso de jQuery a JavaScript</CourseName>
              <Progress>Pregunta <b>27</b> / 30</Progress>
            </CourseRow>
            <Question>¿Qué efecto tiene Promise.all?</Question>
            <Options>
              {options.map((o) => (
                <Option key={o.id} $selected={o.selected}>
                  <Letter $selected={o.selected} $w={o.w}>{o.id}</Letter>
                  <Answer>{o.text}</Answer>
                </Option>
              ))}
            </Options>
          </Exam>
          <Actions>
            <ActionButton $w={97}>Saltar pregunta</ActionButton>
            <ActionButton $w={116} $primary>Siguiente Pregunta</ActionButton>
          </Actions>
        </Window>

        <Dock>
          {apps.map(([icon, running], i) => <DockItem key={i} $running={running}>{icon}</DockItem>)}
          <DockRule />
          <DockItem>{zip}</DockItem>
          <DockItem>{minimized(5, 25)}</DockItem>
          <DockItem>{minimized(8, 20)}</DockItem>
          <DockItem>{trash}</DockItem>
        </Dock>
      </Desktop>
    </>
  );
}
